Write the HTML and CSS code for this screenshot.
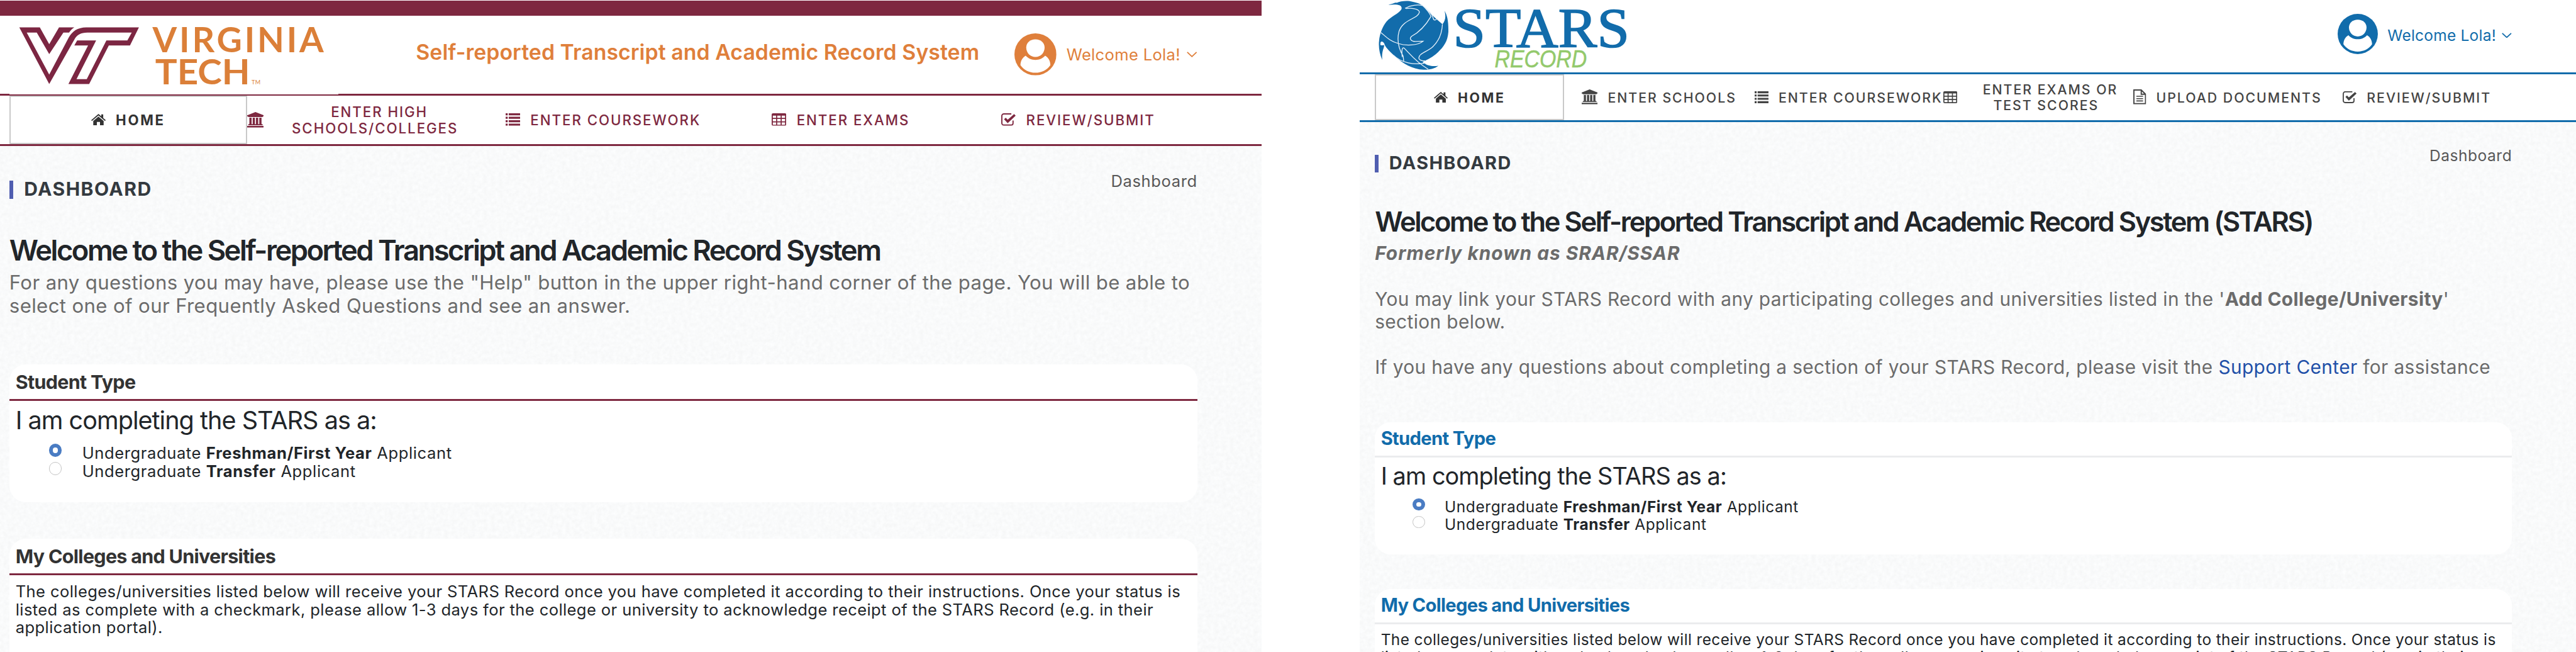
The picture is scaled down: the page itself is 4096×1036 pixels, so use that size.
FILE: index.html
```html
<!DOCTYPE html>
<html lang="en">
<head>
<meta charset="utf-8">
<title>STARS Dashboard</title>
<link rel="stylesheet" href="styles.css">
</head>
<body>
<svg class="defs" aria-hidden="true">
  <filter id="paper" x="0" y="0" width="100%" height="100%" color-interpolation-filters="sRGB">
    <feTurbulence type="fractalNoise" baseFrequency="0.16" numOctaves="3" seed="4"/>
    <feColorMatrix values="0.04 0 0 0 0.957  0.04 0 0 0 0.961  0.04 0 0 0 0.963  0 0 0 0 1"/>
  </filter>
  <symbol id="i-home" viewBox="0 0 28 22"><path d="M14 5 L24 13.5 V22 H17 V15.5 H11 V22 H4 V13.5Z"/><path d="M14 0 L19.5 4.6 V1 H23.2 V7.8 L28 12 L26.6 13.6 L14 3 L1.4 13.6 L0 12Z"/></symbol>
  <symbol id="i-bank" viewBox="0 0 32 30"><path d="M16 0 L32 6.3 V8.4 H30 V9.8 H2 V8.4 H0 V6.3Z"/><path d="M4.3 11h4.3v12.4H4.3zM10.7 11H15v12.4h-4.3zM17 11h4.3v12.4H17zM23.4 11h4.3v12.4h-4.3zM2.2 23.4h27.6v2H2.2zM0 26.8h32V30H0z"/></symbol>
  <symbol id="i-list" viewBox="0 0 28 24"><path d="M0 0h4v4H0zM6 0h22v4H6zM0 6.6h4v4H0zM6 6.6h22v4H6zM0 13.2h4v4H0zM6 13.2h22v4H6zM0 20h4v4H0zM6 20h22v4H6z"/></symbol>
  <symbol id="i-table" viewBox="0 0 28 24"><path fill-rule="evenodd" d="M2.5 0h23A2.5 2.5 0 0 1 28 2.500V21.500A2.500 2.500 0 0 1 25.500 24h-23A2.500 2.500 0 0 1 0 21.500V2.500A2.500 2.500 0 0 1 2.500 0zM2.200 4.500v4.300h6.400V4.500zM10.700 4.500v4.300h6.600V4.500zM19.400 4.500v4.300h6.400V4.500zM2.200 11v4.400h6.400V11zM10.700 11v4.400h6.600V11zM19.400 11v4.400h6.400V11zM2.200 17.600V22h6.400v-4.400zM10.700 17.600V22h6.600v-4.400zM19.400 17.600V22h6.400v-4.400z"/></symbol>
  <symbol id="i-check" viewBox="0 0 28 24"><path d="M19.500 1.200H5A3.800 3.800 0 0 0 1.200 5v14A3.800 3.800 0 0 0 5 22.800h14A3.800 3.800 0 0 0 22.800 19v-5" fill="none" stroke="currentColor" stroke-width="2.300"/><path d="M5.500 11.500 L8.700 8.500 L12.500 12.300 L24.800 1.500 L28 4.600 L12.500 19Z"/></symbol>
  <symbol id="i-file" viewBox="0 0 25 29"><path d="M1.200 1.200H15.500L23.800 9.500V27.800H1.200ZM15.500 1.200V9.500H23.800" fill="none" stroke="currentColor" stroke-width="2.300"/><path d="M6 12.500h13v2H6zM6 17h13v2H6zM6 21.500h13v2H6z"/></symbol>
  <symbol id="i-user" viewBox="0 0 80 80"><circle cx="40" cy="40" r="40"/><path fill="#fff" d="M40 11.500C50 11.500 57.500 18 57.500 27C57.500 37 50 45 40 45S22.500 37 22.500 27C22.500 18 30 11.500 40 11.500Z"/><path fill="#fff" d="M21.500 42.500C15 46 11.500 53 11.500 60.500C18 70 28 75 40 75S62 70 68.500 60.500C68.500 53 65 46 58.500 42.500C54 47.500 47.500 50.500 40 50.500S26 47.500 21.500 42.500Z"/></symbol>
  <symbol id="i-caret" viewBox="0 0 20 11"><path d="M1 1 L10 9.500 L19 1" fill="none" stroke="currentColor" stroke-width="2.200"/></symbol>
</svg>

<div class="screens">
<section class="panel tech">
  <div class="topbar"></div>
  <header class="header">
    <svg class="logo" viewBox="18 30 635 152">
      <path class="vt-mark" transform="scale(.4209 .3333)" d="M395 157H636L595 262H498L408 485H313L403 262H340L353 233H440L350 457H397L487 233H583L603 187H400C370 187 352 200 340 228L225 485L88 157H182L225 255L270 157H340C330 165 322 175 316 187H290L225 312L168 187H122L225 430L315 215C330 180 355 157 395 157Z"/>
      <g class="vt-words"><text x="294" y="100.700" font-size="67.500" textLength="330">VIRGINIA</text>
      <text x="299" y="162.300" font-size="67.500" textLength="183" lengthAdjust="spacingAndGlyphs">TECH</text></g>
      <text class="vt-tm" x="485" y="162" font-size="11" textLength="17">TM</text>
    </svg>
    <div class="brand">Self-reported Transcript and Academic Record System</div>
    <div class="account"><svg class="avatar"><use href="#i-user"/></svg><span class="hello">Welcome Lola!</span><svg class="caret"><use href="#i-caret"/></svg></div>
  </header>
  <nav class="nav">
    <a class="item home"><svg class="home-ic"><use href="#i-home"/></svg><span>HOME</span></a>
    <a class="item wrap"><svg class="bank-ic"><use href="#i-bank"/></svg><span class="two"><span class="first">ENTER HIGH</span><br>SCHOOLS/COLLEGES</span></a>
    <a class="item"><svg class="grid-ic"><use href="#i-list"/></svg><span>ENTER COURSEWORK</span></a>
    <a class="item"><svg class="grid-ic"><use href="#i-table"/></svg><span>ENTER EXAMS</span></a>
    <a class="item"><svg class="grid-ic"><use href="#i-check"/></svg><span>REVIEW/SUBMIT</span></a>
  </nav>
  <main class="main">
    <svg class="paper"><rect width="100%" height="100%" filter="url(#paper)"/></svg>
    <div class="heading"><h2 class="page">DASHBOARD</h2><span class="crumb">Dashboard</span></div>
    <h1 class="welcome">Welcome to the Self-reported Transcript and Academic Record System</h1>
    <p class="lead">For any questions you may have, please use the "Help" button in the upper right-hand corner of the page. You will be able to<br>select one of our Frequently Asked Questions and see an answer.</p>
    <section class="card">
      <h3 class="card-title">Student Type</h3>
      <p class="question">I am completing the STARS as a:</p>
      <label class="option"><i class="radio on"></i><span>Undergraduate <b>Freshman/First Year</b> Applicant</span></label>
      <label class="option"><i class="radio"></i><span>Undergraduate <b>Transfer</b> Applicant</span></label>
    </section>
    <section class="card">
      <h3 class="card-title">My Colleges and Universities</h3>
      <p class="note">The colleges/universities listed below will receive your STARS Record once you have completed it according to their instructions. Once your status is<br>listed as complete with a checkmark, please allow 1-3 days for the college or university to acknowledge receipt of the STARS Record (e.g. in their<br>application portal).</p>
    </section>
  </main>
</section>

<section class="panel stars">
  <header class="header">
    <svg class="logo" viewBox="2651 0 500 139">
      <g transform="translate(2620 0) scale(.3571 .3333)">
        <path class="globe" d="M160 28C185 22 195 14 205 16C225 6 265 2 290 10C320 16 340 25 355 42C385 80 420 110 452 140C468 120 472 95 463 62C478 90 485 120 484 185C480 240 460 270 425 305C400 330 375 342 358 352C345 357 340 360 355 366C370 380 400 386 430 380C410 398 375 404 350 403C290 400 240 370 190 320C160 290 142 270 138 252C130 238 118 236 117 250C115 262 120 265 136 260C142 272 122 290 127 347C112 310 106 270 110 235C112 200 130 150 150 125C175 95 215 80 230 55C238 30 215 22 160 28Z"/>
        <path class="globe-lines" d="M255 50C280 45 325 50 328 70C320 110 240 110 218 180C205 230 215 280 240 325L243 355M250 48C280 30 320 25 345 32C365 50 385 80 390 95C360 150 320 190 285 210C270 225 285 240 305 240L348 238C320 265 250 265 215 252C170 240 145 210 120 188M345 32C370 50 395 75 402 105C405 120 415 118 420 110M452 140C450 180 440 230 400 270C370 300 320 310 325 338C330 350 345 352 358 352M235 330C230 290 235 270 245 278C275 310 310 360 375 400M188 320C230 365 300 375 355 365"/>
      </g>
      <text class="stars-word" x="2802" y="90" font-size="108" textLength="340" lengthAdjust="spacingAndGlyphs">STARS</text>
      <text class="record-word" x="2882" y="129.500" font-size="47" textLength="178" lengthAdjust="spacingAndGlyphs">RECORD</text>
    </svg>
    <div class="account"><svg class="avatar"><use href="#i-user"/></svg><span class="hello">Welcome Lola!</span><svg class="caret"><use href="#i-caret"/></svg></div>
  </header>
  <nav class="nav">
    <a class="item home"><svg class="home-ic"><use href="#i-home"/></svg><span>HOME</span></a>
    <a class="item"><svg class="bank-ic"><use href="#i-bank"/></svg><span>ENTER SCHOOLS</span></a>
    <a class="item"><svg class="grid-ic"><use href="#i-list"/></svg><span>ENTER COURSEWORK</span></a>
    <a class="item wrap"><svg class="grid-ic"><use href="#i-table"/></svg><span class="two"><span class="first">ENTER EXAMS OR</span><br>TEST SCORES</span></a>
    <a class="item"><svg class="file-ic"><use href="#i-file"/></svg><span>UPLOAD DOCUMENTS</span></a>
    <a class="item"><svg class="grid-ic"><use href="#i-check"/></svg><span>REVIEW/SUBMIT</span></a>
  </nav>
  <main class="main">
    <svg class="paper"><rect width="100%" height="100%" filter="url(#paper)"/></svg>
    <div class="heading"><h2 class="page">DASHBOARD</h2><span class="crumb">Dashboard</span></div>
    <h1 class="welcome">Welcome to the Self-reported Transcript and Academic Record System (STARS)</h1>
    <p class="lead"><b class="former">Formerly known as SRAR/SSAR</b><br><br>You may link your STARS Record with any participating colleges and universities listed in the '<b>Add College/University</b>'<br>section below.<br><br>If you have any questions about completing a section of your STARS Record, please visit the <a class="link">Support Center</a> for assistance</p>
    <section class="card">
      <h3 class="card-title">Student Type</h3>
      <p class="question">I am completing the STARS as a:</p>
      <label class="option"><i class="radio on"></i><span>Undergraduate <b>Freshman/First Year</b> Applicant</span></label>
      <label class="option"><i class="radio"></i><span>Undergraduate <b>Transfer</b> Applicant</span></label>
    </section>
    <section class="card">
      <h3 class="card-title">My Colleges and Universities</h3>
      <p class="note">The colleges/universities listed below will receive your STARS Record once you have completed it according to their instructions. Once your status is<br>listed as complete with a checkmark, please allow 1-3 days for the college or university to acknowledge receipt of the STARS Record (e.g. in their</p>
    </section>
  </main>
</section>
</div>
</body>
</html>
```
FILE: styles.css
```css
* { box-sizing: border-box; }
body { margin: 0; background: #fff; font-family: Inter, "Liberation Sans", sans-serif; overflow: hidden; }
h1, h2, h3, p { margin: 0; }
.defs { position: absolute; width: 0; height: 0; }

.screens { display: flex; justify-content: space-between; width: 4096px; height: 1036px; overflow: hidden; }
.panel { display: flex; flex-direction: column; height: 1036px; overflow: hidden; white-space: nowrap; }
.tech { --u: .82464px; --brand: #7e2840; --menu: #7e2840; --accent: #df7f3b; --title: #333; --rule: #7e2840; width: 2006px; }
.stars { --u: .78935px; --brand: #116cab; --menu: #444; --accent: #116cab; --title: #116cab; --rule: #ebecee; width: 1934.500px; }

.topbar { flex: none; height: calc(var(--u) * 30); background: var(--brand); border-top: 1px solid #fff; }
.header { flex: none; display: flex; align-items: center; height: calc(var(--u) * 154); padding-left: calc(var(--u) * 18); border-bottom: calc(var(--u) * 4) solid var(--brand); }
.stars .header { height: calc(var(--u) * 149.400); padding-left: calc(var(--u) * 31.300); }
.logo { flex: none; align-self: flex-start; width: calc(var(--u) * 635); height: calc(var(--u) * 152); background: #fff; margin-bottom: calc(var(--u) * -4); }
.stars .logo { width: calc(var(--u) * 522.400); height: calc(var(--u) * 145.200); }
.vt-mark { fill: #7c2642; }
.vt-words { fill: #db7f38; font-family: Lato, sans-serif; font-weight: 700; }
.vt-tm { fill: #db7f38; font-family: Lato, sans-serif; }
.globe { fill: #126cab; }
.globe-lines { fill: none; stroke: #e8f2fa; stroke-width: 4.500; }
.stars-word { fill: #126cab; stroke: #126cab; stroke-width: 2; font-family: "Liberation Serif", serif; }
.record-word { fill: #93c96c; stroke: #93c96c; stroke-width: .600; font-family: "Liberation Sans", sans-serif; font-style: italic; }
.brand { margin-left: calc(var(--u) * 149); padding-bottom: calc(var(--u) * 10); color: var(--accent); font-size: calc(var(--u) * 41); font-weight: 600; letter-spacing: .0018em; }
.account { display: flex; align-items: center; margin-left: auto; margin-right: calc(var(--u) * 124.500); color: var(--accent); font-size: calc(var(--u) * 31); letter-spacing: .013em; }
.stars .account { margin-right: calc(var(--u) * 129); letter-spacing: .010em; }
.avatar { width: calc(var(--u) * 81); height: calc(var(--u) * 81); margin-right: calc(var(--u) * 19); fill: currentColor; }
.stars .avatar { margin-bottom: calc(var(--u) * 8); }
.stars .hello, .stars .caret { margin-bottom: calc(var(--u) * 4); }
.caret { width: calc(var(--u) * 20); height: calc(var(--u) * 11); margin-left: calc(var(--u) * 12); }

.nav { flex: none; display: flex; height: calc(var(--u) * 97); padding-left: calc(var(--u) * 18); border-bottom: calc(var(--u) * 4) solid var(--brand); color: var(--menu); font-size: calc(var(--u) * 27); font-weight: 500; line-height: calc(var(--u) * 32); letter-spacing: .088em; }
.stars .nav { height: calc(var(--u) * 96); padding-left: calc(var(--u) * 31.300); letter-spacing: .0925em; }
.item { flex: none; display: flex; align-items: center; justify-content: center; width: calc(var(--u) * 458); }
.stars .item { width: calc(var(--u) * 381.700); }
.item > span { padding-top: calc(var(--u) * 3); }
.item > svg { flex: none; fill: currentColor; margin-right: calc(var(--u) * 20); }
.item.home { border: calc(var(--u) * 3) solid #c9c9c9; color: #333; font-weight: 700; letter-spacing: .12em; }
.item.wrap { justify-content: flex-start; }
.item.wrap > svg { margin-right: calc(var(--u) * 4); }
.two { flex: 1; text-align: center; }
.first { padding-left: calc(var(--u) * 17); }
.home-ic { width: calc(var(--u) * 28); height: calc(var(--u) * 22); }
.bank-ic { width: calc(var(--u) * 32); height: calc(var(--u) * 30); }
.grid-ic { width: calc(var(--u) * 28); height: calc(var(--u) * 24); }
.file-ic { width: calc(var(--u) * 26); height: calc(var(--u) * 30); }

.main { position: relative; z-index: 0; flex: 1 0 auto; height: calc(var(--u) * 980); padding-left: calc(var(--u) * 18); background: #f9fafa; }
.stars .main { padding-left: calc(var(--u) * 31.300); }
.paper { position: absolute; inset: 0; z-index: -1; width: 100%; height: 100%; }
.heading { display: flex; justify-content: space-between; align-items: flex-start; width: calc(var(--u) * 2290.500); padding-top: calc(var(--u) * 54); }
.page { height: calc(var(--u) * 35.500); margin-top: calc(var(--u) * 12.500); padding-left: calc(var(--u) * 21); border-left: calc(var(--u) * 8) solid #505eb0; color: #343a40; font-size: calc(var(--u) * 36.500); font-weight: 700; line-height: calc(var(--u) * 33); letter-spacing: .0485em; }
.crumb { color: #585858; font-size: calc(var(--u) * 31); line-height: calc(var(--u) * 30); letter-spacing: .023em; }
.welcome { margin-top: calc(var(--u) * 69.200); color: #212529; font-size: calc(var(--u) * 55); font-weight: 600; line-height: calc(var(--u) * 60); letter-spacing: -.0553em; }
.lead { margin: calc(var(--u) * 10) 0 calc(var(--u) * 88.300); color: #6b6b6b; font-size: calc(var(--u) * 37.800); line-height: calc(var(--u) * 45.900); letter-spacing: .0119em; }
.stars .lead { letter-spacing: .0125em; }
.former { font-style: italic; letter-spacing: .0335em; }
.link { color: #2150a8; }

.card { width: calc(var(--u) * 2290.500); height: calc(var(--u) * 266); margin-bottom: calc(var(--u) * 70); border-radius: calc(var(--u) * 32); background: #fff; color: #212529; }
.card-title { height: calc(var(--u) * 70.500); padding-left: calc(var(--u) * 12); border-bottom: calc(var(--u) * 4) solid var(--rule); color: var(--title); font-size: calc(var(--u) * 37); font-weight: 700; line-height: calc(var(--u) * 67); letter-spacing: -.0232em; }
.question { margin: calc(var(--u) * 13) 0 calc(var(--u) * 19.600); padding-left: calc(var(--u) * 12); font-size: calc(var(--u) * 48); line-height: calc(var(--u) * 50); letter-spacing: -.0248em; }
.option { display: flex; align-items: flex-start; padding-left: calc(var(--u) * 76); font-size: calc(var(--u) * 31); line-height: calc(var(--u) * 35.300); letter-spacing: .0235em; }
.radio { width: calc(var(--u) * 24.500); height: calc(var(--u) * 24.500); margin-right: calc(var(--u) * 40); border: 1px solid #c4c4c4; border-radius: 50%; background: #fff; }
.radio.on { border: calc(var(--u) * 8.200) solid #4a7cc3; }
.note { margin-top: calc(var(--u) * 14.300); padding-left: calc(var(--u) * 12); font-size: calc(var(--u) * 31); line-height: calc(var(--u) * 34.800); letter-spacing: .0157em; }
b { font-weight: 700; }
```
